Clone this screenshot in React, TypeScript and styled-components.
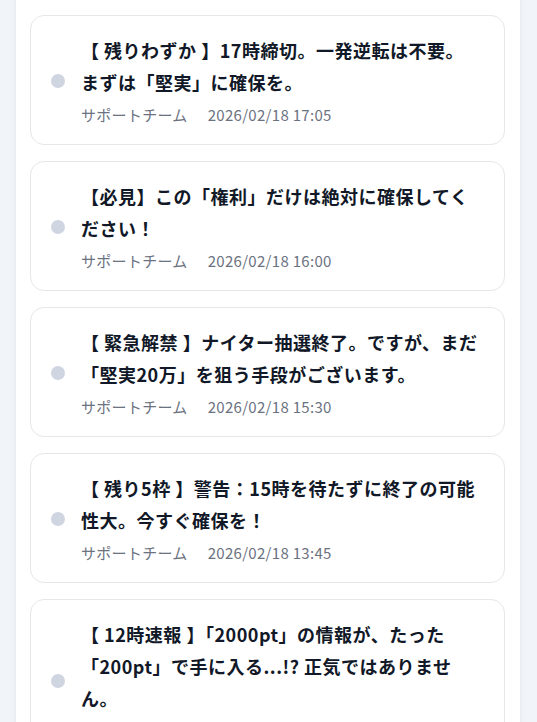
import React from "react";
import styled, { createGlobalStyle } from "styled-components";

const GlobalStyle = createGlobalStyle`
  html, body {
    margin: 0;
    padding: 0;
    background: #f1f5f9;
  }
  body {
    font-family: "Noto Sans CJK JP", "Noto Sans", sans-serif;
  }
`;

const Page = styled.div`
  padding: 0 17px 0 16px;
`;

const Panel = styled.main`
  background: #ffffff;
  box-shadow: 0 0 0 1px #e9eef4, 0 0 6px rgba(15, 23, 42, 0.06);
  padding: 15px 15px 24px 14px;
  display: flex;
  flex-direction: column;
  gap: 16px;
  min-height: 722px;
  box-sizing: border-box;
`;

const Card = styled.article`
  display: flex;
  align-items: center;
  gap: 16px;
  background: #ffffff;
  border: 1px solid #e5e7eb;
  border-radius: 14px;
  padding: 18px 24px 17px 20px;
`;

const Dot = styled.span`
  flex: 0 0 auto;
  width: 14px;
  height: 14px;
  border-radius: 50%;
  background: #cfd6e2;
`;

const Body = styled.div`
  flex: 1 1 auto;
  min-width: 0;
`;

const Title = styled.h3`
  margin: 0;
  font-size: 18px;
  font-weight: 700;
  line-height: 32px;
  letter-spacing: 0.5px;
  color: #111827;
`;

const Meta = styled.div`
  margin-top: 5px;
  display: flex;
  gap: 20px;
  font-size: 15px;
  line-height: 24px;
  letter-spacing: 0.3px;
  color: #6b7280;
`;

const items = [
  {
    title: "【 残りわずか 】17時締切。一発逆転は不要。まずは「堅実」に確保を。",
    date: "2026/02/18 17:05",
  },
  {
    title: "【必見】この「権利」だけは絶対に確保してください！",
    date: "2026/02/18 16:00",
  },
  {
    title: "【 緊急解禁 】ナイター抽選終了。ですが、まだ「堅実20万」を狙う手段がございます。",
    date: "2026/02/18 15:30",
  },
  {
    title: "【 残り5枠 】警告：15時を待たずに終了の可能性大。今すぐ確保を！",
    date: "2026/02/18 13:45",
  },
  {
    title: "【 12時速報 】「2000pt」の情報が、たった「200pt」で手に入る...!? 正気ではありません。",
    date: "2026/02/18 12:00",
  },
];

export default function App() {
  return (
    <>
      <GlobalStyle />
      <Page>
        <Panel>
          {items.map((it, i) => (
            <Card key={i}>
              <Dot />
              <Body>
                <Title>{it.title}</Title>
                <Meta>
                  <span>サポートチーム</span>
                  <span>{it.date}</span>
                </Meta>
              </Body>
            </Card>
          ))}
        </Panel>
      </Page>
    </>
  );
}
